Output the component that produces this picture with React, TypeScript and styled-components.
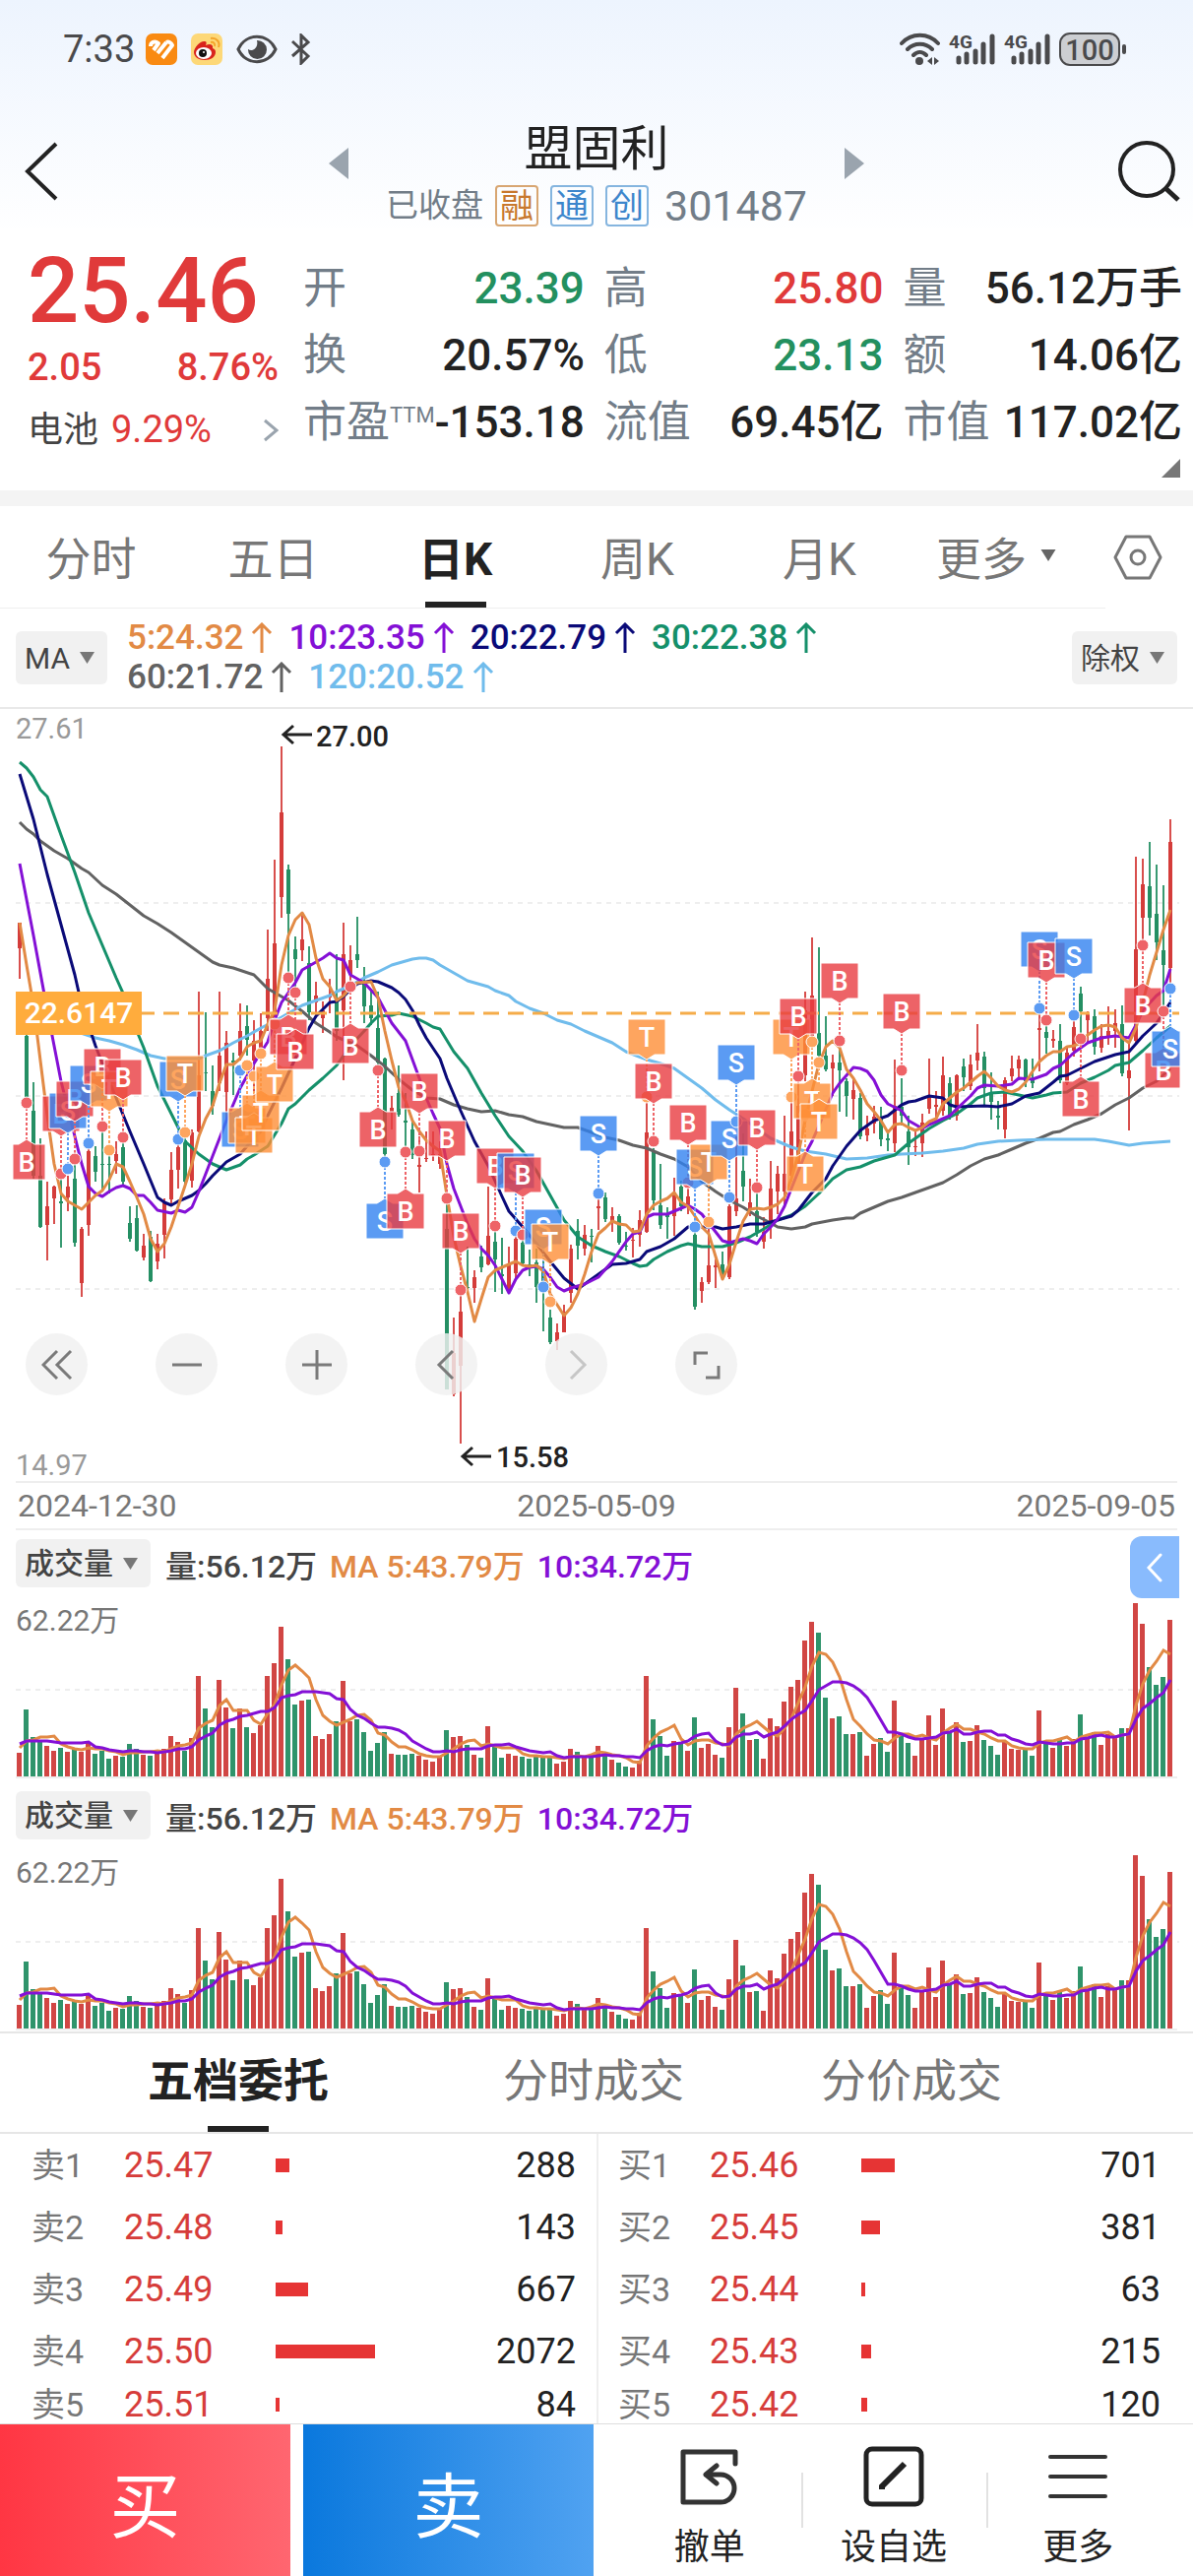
import React from "react";
import styled, { createGlobalStyle, css } from "styled-components";

const RED = "#e03a3a";
const GREEN = "#23905f";
const INK = "#222222";
const GRAY = "#777777";
const SLATE = "#727d88";
const ORANGE = "#e28a45";
const PURPLE = "#8410d6";
const NAVY = "#0a0a78";
const TEAL = "#15906a";
const SKY = "#70bcec";
const STONE = "#626262";

const GlobalStyle = createGlobalStyle`
  *, *::before, *::after { box-sizing: border-box; }
  body {
    margin: 0;
    background: #ffffff;
    color: ${INK};
    font-family: Roboto, "Noto Sans CJK SC", sans-serif;
  }
  button, select { font: inherit; color: inherit; border: 0; background: none; padding: 0; margin: 0; cursor: pointer; }
  h1, dl, dd, dt { margin: 0; font-weight: inherit; }
`;

/* ---------- data ---------- */

// Turnover per session: r = up day, g = down day, number = volume in plot units.
const VOLUME =
  "r71 g205 g121 g111 r94 r79 g88 r76 g85 r76 r106 g70 g79 g55 r63 g59 g100 g85 r67 g64 r79 r85 r124 r106 g79 r117 " +
  "r307 g208 g151 r295 r211 g147 r208 g151 r133 r156 r307 r346 r457 g358 g220 r231 g235 r124 r115 r130 g169 r292 r169 " +
  "g175 g136 g79 g103 g136 r70 g67 g67 g70 r64 r52 r46 r61 g142 r121 r124 g97 r67 g58 r154 g91 g58 r70 r64 g61 g55 " +
  "g61 g61 g61 r40 r46 r85 g76 r58 g63 r94 g66 r52 g43 g31 r28 r49 r307 g175 g123 g64 r108 g106 r79 g181 r88 r100 " +
  "r67 g58 r151 r271 g193 r112 g115 r55 r178 r154 r229 r274 r295 r415 r472 g439 g241 r178 g184 g130 r130 g136 r64 " +
  "r100 g117 g76 r232 g123 g103 r64 r111 r187 r97 r208 g136 r166 g106 r109 r157 g112 g94 g67 r109 r85 r82 g82 g64 " +
  "r202 g109 r88 g114 r94 r114 g190 r121 g136 r97 r130 r121 g147 r147 r529 r466 g334 g280 g304 r478";

const volumes = VOLUME.split(" ").map((s) => ({ up: s[0] === "r", v: Number(s.slice(1)) }));

const average = (size: number, lead: number[]) =>
  volumes.map((_, i) =>
    i < lead.length
      ? lead[i]
      : volumes.slice(Math.max(0, i - size + 1), i + 1).reduce((sum, d) => sum + d.v, 0) /
        Math.min(size, i + 1)
  );

const volumeMa5 = average(5, [86, 108, 110, 119]);
const volumeMa10 = average(10, [99, 108, 108, 108, 108, 105, 103, 103, 103]);

// Candles as high, low, body top, body bottom. 0 is 27.61 and 1540 is 14.97.
const CANDLES = `425 538 425 476|600 790 650 780|743 935 800 930|855 1032 930 1030|940 1097 990 1028|948 1026 950 975|925 1073 980 983|930 1000 950 972
890 1070 935 1062|1030 1170 1035 1143|870 1048 880 1028|870 940 890 922|840 960 905 908|885 965 905 908|860 925 885 900|860 948 872 940
990 1060 1024 1055|988 1080 1014 1078|1044 1098 1068 1092|1038 1140 1050 1138|1044 1116 1065 1100|975 1094 980 1046|882 990 918 976|866 955 872 918
855 945 858 940|836 952 842 938|562 842 730 840|604 760 723 726|710 808 760 790|563 760 690 745|640 822 665 762|684 768 700 703
586 700 640 690|590 690 632 658|620 770 660 700|605 700 640 680|440 640 538 615|300 620 466 615|74 416 205 375|310 530 320 408
452 560 478 498|405 502 458 480|472 620 505 604|542 612 570 585|582 645 600 615|538 606 570 575|488 660 575 640|425 738 488 600
470 550 500 530|414 515 488 500|513 625 545 592|560 630 590 615|563 710 635 704|693 895 695 885|770 836 794 804|710 812 765 808
765 870 820 823|822 895 836 888|850 962 908 911|840 902 893 896|840 900 885 888|860 915 885 905|985 1355 1035 1355|1212 1368 1282 1365
1165 1462 1200 1308|1070 1155 1150 1153|1117 1182 1130 1152|1068 1122 1090 1112|950 1108 1048 1106|1040 1160 1060 1096|1052 1165 1125 1128|1070 1165 1105 1160
1050 1132 1055 1124|1055 1110 1062 1104|1076 1128 1106 1109|1075 1182 1102 1150|1100 1238 1120 1152|1195 1265 1212 1260|1223 1275 1240 1258|1185 1240 1200 1240
1066 1182 1075 1162|1015 1095 1038 1068|1028 1088 1046 1074|1034 1102 1048 1051|975 1036 990 993|963 1022 972 1015|992 1040 1010 1024|1005 1066 1010 1062
1040 1078 1068 1071|1032 1092 1056 1059|998 1070 1018 1046|770 1042 842 1040|875 998 880 978|906 1035 988 1028|992 1055 1008 1011|932 1048 962 1010
938 1000 950 990|955 1006 970 985|1035 1195 1046 1190|1130 1182 1140 1158|1034 1144 1108 1140|1095 1152 1108 1111|1080 1135 1105 1132|985 1134 990 1130
850 1010 975 1000|845 980 920 950|935 1010 982 995|965 1050 1000 1040|1012 1074 1040 1060|900 1055 955 1020|910 1005 925 960|810 985 925 960
780 940 840 930|735 910 790 905|562 740 600 730|454 660 570 650|475 700 645 690|612 722 690 718|688 770 704 716|670 802 704 720
735 812 740 770|735 818 758 776|765 856 775 850|810 860 834 848|790 845 812 826|792 870 814 856|840 880 855 858|697 882 790 865
735 830 792 810|810 908 840 872|838 890 870 873|806 892 824 864|695 805 768 796|760 825 788 791|692 810 730 800|734 818 745 810
728 820 730 810|696 760 712 734|688 758 708 750|628 720 685 700|683 788 692 755|724 818 765 782|780 836 810 813|734 854 738 836
690 740 716 732|690 738 698 716|695 752 698 740|695 755 735 745|600 722 636 639|625 686 642 655|638 675 657 660|628 744 660 738
675 748 684 745|620 692 634 680|552 660 567 602|602 665 608 620|598 688 612 672|628 684 650 675|592 668 640 655|597 675 626 640
590 732 628 726|660 838 720 735|294 665 478 660|298 460 348 416|264 450 352 416|310 500 408 465|350 590 480 510|220 545 265 515`
  .split(/[|\n]/)
  .map((c) => c.trim().split(" ").map(Number));

// Moving averages as "session level" pairs, in the same units as the candles.
const AVERAGES: { color: string; points: string }[] = [
  {
    color: STONE,
    points:
      "0 225 1 240 2 248 3 262 5 282 7 298 9 318 10 325 12 350 14 368 16 390 18 412 20 427 22 445 24 465 26 484 28 503 29 510 31 515 34 530 36 556 37 564 39 580 41 602 43 625 45 642 46 652 49 670 51 690 53 712 55 736 57 758 59 775 61 777 63 788 65 795 67 801 69 800 71 808 73 812 75 822 77 828 79 833 81 833 83 842 85 852 87 858 89 868 91 875 93 885 95 895 97 912 99 940 101 960 103 978 105 992 107 1010 109 1024 110 1030 112 1035 114 1030 115 1025 118 1018 120 1013 121 1013 122 1004 124 992 126 980 128 972 130 962 132 952 134 942 136 928 138 910 140 895 142 887 144 876 146 865 148 855 150 843 151 840 153 828 155 818 157 805 159 788 161 775 163 755 165 740 167 715",
  },
  {
    color: SKY,
    points:
      "8 640 11 655 13 660 15 668 17 678 19 690 21 695 26 695 27 690 29 680 31 665 33 650 35 635 37 622 39 605 41 590 43 580 45 570 46 562 48 550 50 535 52 523 54 510 56 502 57 498 58 496 59 495 60 499 61 510 63 525 65 540 68 553 69 560 71 570 72 582 74 595 76 606 78 620 80 628 82 640 84 652 86 665 88 683 91 697 93 705 95 715 97 735 99 755 101 778 103 798 105 815 107 835 109 855 112 872 114 880 117 886 120 895 123 893 126 888 128 885 131 883 134 880 137 874 139 866 142 861 145 858 149 856 156 856 158 861 161 868 163 865 167 860",
  },
  {
    color: TEAL,
    points:
      "0 106 1 118 2 135 3 160 4 175 6 250 8 325 10 405 12 470 14 535 16 595 17 640 18 675 20 750 22 805 24 860 26 885 28 905 30 918 32 907 33 895 34 888 36 870 38 825 39 795 40 785 42 758 44 735 46 710 48 670 50 640 51 625 52 612 54 610 55 605 57 612 59 625 60 633 61 637 63 682 65 715 67 765 69 810 71 850 73 880 75 920 77 968 79 1018 81 1050 83 1068 85 1080 87 1090 89 1103 90 1110 91 1108 92 1096 94 1080 96 1068 97 1064 99 1070 102 1070 104 1062 106 1050 108 1035 110 1018 112 1008 114 990 116 965 118 935 120 918 122 912 124 900 126 892 127 888 129 865 130 855 132 835 134 820 136 805 138 785 139 775 141 765 143 763 145 768 147 774 149 768 150 764 152 762 154 745 156 733 158 720 159 710 161 703 163 680 165 655 167 632",
  },
  {
    color: NAVY,
    points:
      "0 130 2 220 4 330 6 430 8 530 9 590 11 670 13 740 14 775 16 840 18 905 20 972 21 982 22 987 23 980 25 968 26 958 27 945 28 930 30 902 32 885 34 855 35 840 36 810 38 755 40 695 42 635 43 612 44 598 45 585 46 582 47 572 48 558 49 547 51 541 52 543 54 555 55 564 56 578 57 600 58 630 59 655 61 695 62 735 64 800 66 860 68 910 70 970 71 1000 73 1030 75 1065 77 1100 79 1132 81 1155 83 1135 85 1115 86 1106 88 1103 90 1095 91 1080 93 1070 95 1055 96 1042 97 1030 101 1030 102 1034 104 1030 106 1026 108 1025 110 1018 112 1010 113 998 115 962 117 935 118 910 120 870 122 838 124 820 126 810 128 788 129 782 130 780 132 770 134 775 135 788 136 792 140 790 142 792 144 785 146 770 148 765 150 742 151 732 152 730 154 715 156 702 159 688 161 683 163 650 165 625 167 585",
  },
  {
    color: PURPLE,
    points:
      "0 308 2 450 4 600 6 740 8 850 9 905 10 950 11 965 12 970 13 960 14 952 15 948 16 955 17 968 18 968 19 982 20 998 22 1003 23 998 24 1002 25 992 26 960 28 890 30 820 32 755 34 705 36 662 37 620 38 585 40 545 41 520 42 512 44 495 45 486 46 495 47 500 48 530 50 545 52 575 54 625 56 660 57 698 58 735 59 775 60 805 61 835 62 905 63 955 64 990 65 1025 66 1055 67 1075 68 1088 69 1108 70 1135 71 1162 72 1135 73 1118 74 1112 75 1110 76 1116 77 1130 78 1150 79 1158 80 1152 82 1144 84 1130 86 1100 88 1060 89 1045 90 1040 91 1012 92 1006 94 1006 96 994 97 988 98 995 99 1005 101 1040 102 1058 103 1062 104 1058 105 1055 106 1058 107 1064 108 1045 109 1030 110 1015 111 990 112 955 114 885 115 860 116 830 118 765 119 745 120 730 121 713 122 715 123 722 124 738 125 768 126 785 128 800 129 820 130 828 131 834 132 828 134 815 135 810 136 795 138 770 139 755 140 748 142 750 144 747 145 735 147 737 149 728 150 715 151 710 153 685 155 665 157 655 159 650 161 655 162 630 163 600 165 570 166 560 167 517",
  },
  {
    color: ORANGE,
    points:
      "0 425 1 510 2 590 3 700 4 810 5 905 6 965 7 980 8 987 9 996 10 982 11 968 12 958 13 936 14 905 15 912 16 940 17 972 18 1005 19 1055 20 1080 21 1065 22 1030 23 990 24 948 25 905 26 850 27 815 28 790 29 745 30 708 31 708 32 695 33 672 34 665 35 660 36 628 37 600 38 510 39 450 40 420 41 406 42 430 43 495 44 538 45 552 46 580 47 570 48 555 49 545 51 542 52 575 53 640 54 700 55 752 56 780 57 820 58 840 59 858 60 870 61 880 62 968 63 1050 64 1110 65 1160 66 1220 67 1175 68 1130 69 1118 70 1112 71 1106 72 1100 73 1108 74 1110 75 1108 76 1120 77 1165 78 1185 79 1208 80 1192 81 1165 82 1125 83 1080 84 1045 85 1032 86 1020 87 1026 88 1028 89 1040 90 1038 91 1005 92 988 93 980 94 974 95 962 96 982 97 990 98 1010 99 1030 100 1045 101 1090 102 1135 103 1105 104 1060 105 1020 106 995 107 993 108 996 109 992 110 985 111 972 112 935 113 885 114 820 115 760 116 705 117 672 118 660 119 675 120 718 121 735 122 758 123 785 124 802 125 820 126 842 127 828 128 825 129 833 130 838 131 833 132 822 133 815 134 785 135 775 136 762 137 755 138 742 139 732 140 722 141 735 142 750 143 758 144 762 145 756 146 742 147 722 148 702 149 690 150 682 151 682 152 672 153 670 154 665 155 648 156 638 157 632 158 630 159 634 160 655 161 665 162 635 163 585 164 530 165 485 166 440 167 400",
  },
];

type Kind = "B" | "S" | "T";
// Trades: session, kind, label top, dot level. The label points towards its dot.
const TRADES: [number, Kind, number, number][] = [
  [1, "B", 866, 784], [6, "B", 770, 925], [7, "S", 765, 916], [8, "B", 741, 895], [10, "S", 710, 864],
  [12, "B", 677, 831], [13, "T", 722, 878], [15, "B", 698, 852], [23, "S", 702, 856], [24, "T", 689, 843],
  [32, "S", 802, 719], [33, "T", 793, 709], [34, "T", 814, 732], [35, "T", 769, 686], [37, "T", 711, 628],
  [39, "B", 617, 536], [40, "B", 647, 565], [48, "B", 635, 553], [52, "B", 802, 719], [53, "S", 984, 902],
  [56, "B", 965, 882], [58, "B", 726, 880], [62, "B", 820, 974], [64, "B", 1003, 1156], [69, "B", 874, 1029],
  [72, "S", 884, 1039], [73, "B", 892, 1047], [76, "S", 996, 1150], [77, "T", 1025, 1180], [84, "S", 810, 964],
  [91, "T", 617, 772], [92, "B", 706, 860], [97, "B", 788, 943], [98, "S", 877, 1030], [100, "T", 867, 1021],
  [103, "S", 820, 973], [104, "S", 668, 822], [107, "B", 798, 953], [112, "T", 617, 772], [113, "B", 576, 731],
  [114, "T", 890, 808], [115, "T", 745, 662], [116, "T", 786, 704], [119, "B", 506, 660], [128, "B", 566, 720],
  [148, "S", 442, 596], [149, "B", 465, 619], [153, "S", 456, 609], [154, "B", 740, 656], [163, "B", 554, 471],
  [166, "B", 685, 602], [167, "S", 640, 556],
];
const TRADE_FILL: Record<Kind, string> = {
  B: "rgba(233,60,65,0.8)",
  S: "rgba(50,130,240,0.8)",
  T: "rgba(254,142,55,0.8)",
};
const TRADE_DOT: Record<Kind, string> = { B: "#ee6367", S: "#5b9bf3", T: "#fea55f" };

const px = (session: number) => 20 + session * 7;
const py = (level: number) => Math.round(level / 1.96);

const toPath = (points: string) => {
  const n = points.split(" ").map(Number);
  const out: string[] = [];
  for (let i = 0; i < n.length; i += 2) out.push(`${px(n[i])},${py(n[i + 1])}`);
  return out.join(" ");
};

/* ---------- status bar and title ---------- */

const Screen = styled.main`
  display: flex;
  flex-direction: column;
  background: #ffffff;
`;

const Top = styled.header`
  background: linear-gradient(#edf4fe, #ffffff 240px);
`;

const StatusBar = styled.div`
  height: 100px;
  display: flex;
  align-items: center;
  justify-content: space-between;
  padding: 0 67px 0 64px;
  color: #4a4a4c;
  font-size: 38px;
`;

const StatusGroup = styled.div<{ $gap: number }>`
  display: flex;
  align-items: center;
  gap: ${(p) => p.$gap}px;
`;

const TitleBar = styled.div`
  margin-top: 15px;
  height: 117px;
  display: grid;
  grid-template-columns: 1fr auto 1fr;
  align-items: center;
  padding: 0 12px;
`;

const IconButton = styled.button`
  display: flex;
  align-items: center;
  justify-content: center;
`;

const BackButton = styled(IconButton)`
  justify-self: start;
  padding-left: 12px;
`;

const SearchButton = styled(IconButton)`
  justify-self: end;
`;

const NameBlock = styled.div`
  align-self: stretch;
  display: flex;
  width: 544px;
  justify-content: space-between;
`;

const StepButton = styled(IconButton)`
  height: 102px;
`;

const NameColumn = styled.div`
  display: flex;
  flex-direction: column;
  align-items: center;
  gap: 8px;
  padding-top: 10px;
`;

const StockName = styled.h1`
  font-size: 49px;
  line-height: 54px;
`;

const SubLine = styled.div`
  display: flex;
  align-items: center;
  gap: 12px;
  color: ${SLATE};
  font-size: 33px;
  line-height: 44px;
`;

const Tag = styled.span<{ $tone: string; $edge: string }>`
  width: 44px;
  height: 42px;
  border: 2px solid ${(p) => p.$edge};
  border-radius: 4px;
  color: ${(p) => p.$tone};
  display: flex;
  align-items: center;
  justify-content: center;
  font-size: 34px;
`;

const Code = styled.span`
  font-size: 43px;
  margin-left: 4px;
`;

/* ---------- quote ---------- */

const Quote = styled.section`
  display: flex;
  align-items: flex-start;
  position: relative;
  padding: 18px 11px 35px 28px;
`;

const PriceColumn = styled.div`
  width: 280px;
  color: ${RED};
  font-size: 38px;
  line-height: 44px;
`;

const BigPrice = styled.div`
  font-size: 92px;
  line-height: 92px;
  font-weight: 500;
`;

const PriceLine = styled.div<{ $top: number }>`
  display: flex;
  justify-content: space-between;
  align-items: center;
  margin-top: ${(p) => p.$top}px;
  padding-right: 25px;
  font-weight: ${(p) => (p.$top < 12 ? 500 : 400)};
`;

const Sector = styled.span`
  font-size: 36px;
  color: #444444;
  margin-right: 13px;
`;

const Stats = styled.dl`
  flex: 1;
  display: grid;
  grid-template-columns: repeat(3, 1fr);
  column-gap: 20px;
  padding-top: 9px;
`;

const Stat = styled.div`
  display: flex;
  justify-content: space-between;
  white-space: nowrap;
  height: 68px;
  line-height: 68px;
  font-size: 44px;
`;

const StatName = styled.dt`
  color: ${SLATE};
  sup {
    font-size: 22px;
    line-height: 0;
    vertical-align: 15px;
  }
`;

const StatValue = styled.dd<{ $tone?: string }>`
  color: ${(p) => p.$tone ?? INK};
  font-weight: 500;
`;

const Corner = styled.svg`
  position: absolute;
  right: 13px;
  bottom: 13px;
`;

const Band = styled.div`
  height: 16px;
  background: #f4f4f4;
`;

/* ---------- tabs ---------- */

const PeriodTabs = styled.nav`
  display: flex;
  height: 104px;
`;

const tabText = css`
  font-size: 46px;
  color: ${GRAY};
  white-space: nowrap;
`;

const Tab = styled.button<{ $active?: boolean }>`
  ${tabText}
  flex: 185 1 0;
  position: relative;
  display: flex;
  align-items: center;
  justify-content: center;
  padding-bottom: 4px;
  border-bottom: 1px solid #eeeeee;
  ${(p) =>
    p.$active &&
    css`
      color: ${INK};
      font-weight: 700;
      &::after {
        content: "";
        position: absolute;
        bottom: 0;
        width: 62px;
        height: 6px;
        background: ${INK};
      }
    `}
`;

const MoreTab = styled(Tab)`
  flex: 174 1 0;
  gap: 14px;
  padding-right: 24px;
`;

const GearButton = styled(IconButton)`
  width: 89px;
  padding-right: 24px;
`;

/* ---------- indicator header ---------- */

const Indicators = styled.div`
  display: flex;
  align-items: center;
  justify-content: space-between;
  height: 102px;
  padding: 0 16px;
  border-bottom: 2px solid #e9e9e9;
`;

const IndicatorLeft = styled.div`
  display: flex;
  align-items: center;
  gap: 20px;
`;

const Picker = styled.span<{ $width: number; $height: number }>`
  position: relative;
  display: inline-flex;
  width: ${(p) => p.$width}px;
  height: ${(p) => p.$height}px;
  select {
    appearance: none;
    width: 100%;
    padding-left: 9px;
    border-radius: 6px;
    background: #f1f1f1;
    color: #444444;
    font-size: 30px;
  }
  svg {
    position: absolute;
    right: 13px;
    top: 50%;
    margin-top: -6px;
    pointer-events: none;
  }
`;

const MaGrid = styled.div`
  display: flex;
  flex-direction: column;
  font-size: 35px;
  font-weight: 500;
  line-height: 40px;
`;

const MaRow = styled.div`
  display: flex;
  gap: 16px;
`;

const MaValue = styled.span<{ $tone: string }>`
  display: flex;
  align-items: center;
  gap: 8px;
  color: ${(p) => p.$tone};
`;

/* ---------- charts ---------- */

const ChartBox = styled.section`
  position: relative;
`;

const Plot = styled.svg`
  display: block;
  width: 100%;
  height: auto;
  font-family: Roboto, "Noto Sans CJK SC", sans-serif;
`;

const ChartControls = styled.div`
  position: absolute;
  left: 26px;
  bottom: 89px;
  display: flex;
  gap: 69px;
`;

const RoundButton = styled.button`
  width: 63px;
  height: 63px;
  border-radius: 50%;
  background: rgba(240, 240, 240, 0.82);
  display: flex;
  align-items: center;
  justify-content: center;
`;

const Dates = styled.div`
  display: flex;
  justify-content: space-between;
  margin: 0 16px;
  padding: 0 2px;
  border-bottom: 2px solid #eeeeee;
  color: ${GRAY};
  font-size: 32px;
  line-height: 46px;
`;

const VolumeStack = styled.div`
  display: flex;
  flex-direction: column;
  gap: 3px;
  border-bottom: 2px solid #e6e6e6;
`;

const VolumeBox = styled.section`
  position: relative;
`;

const VolumeHead = styled.div`
  display: flex;
  align-items: center;
  gap: 13px;
  height: 60px;
  padding: 8px 16px 1px;
  font-size: 32px;
  font-weight: 500;
  white-space: nowrap;
`;

const Tint = styled.span<{ $tone: string; $lead?: boolean }>`
  color: ${(p) => p.$tone};
  margin-left: ${(p) => (p.$lead ? 2 : 0)}px;
`;

const SideHandle = styled.button`
  position: absolute;
  right: 14px;
  top: 6px;
  width: 50px;
  height: 63px;
  border-radius: 12px 0 0 12px;
  background: #89bbfd;
  display: flex;
  align-items: center;
  justify-content: center;
`;

/* ---------- order book ---------- */

const BookTabs = styled.nav`
  display: grid;
  grid-template-columns: 484fr 238fr 408fr 82fr;
  height: 102px;
  border-bottom: 2px solid #e6e6e6;
`;

const BookTab = styled(Tab)`
  border-bottom: 0;
  padding-bottom: 12px;
`;

const Book = styled.div`
  display: grid;
  grid-template-columns: 1fr 1fr;
`;

const BookTable = styled.table<{ $right?: boolean }>`
  width: 100%;
  border-collapse: collapse;
  table-layout: fixed;
  ${(p) => p.$right && "border-left: 2px solid #eeeeee;"}
  td, th {
    padding: 0;
    height: 63px;
    font-size: 36px;
    line-height: 36px;
    font-weight: 400;
    text-align: left;
    vertical-align: middle;
  }
  tr:last-child > * {
    height: 42px;
    padding-top: 4px;
  }
  th {
    width: ${(p) => (p.$right ? 114 : 126)}px;
    padding-left: ${(p) => (p.$right ? 20 : 32)}px;
    font-size: 34px;
    color: ${GRAY};
  }
  td:nth-child(2) { width: 154px; color: #d63c3a; }
  td:nth-child(3) { width: 120px; }
  td:nth-child(4) {
    text-align: right;
    padding-right: ${(p) => (p.$right ? 32 : 21)}px;
  }
`;

const SizeBar = styled.div`
  height: 14px;
  background: #e63434;
`;

/* ---------- footer ---------- */

const Footer = styled.footer`
  display: flex;
  height: 156px;
  border-top: 1px solid #dddddd;
`;

const TradeButton = styled.button<{ $from: string; $to: string }>`
  flex: 295 1 0;
  color: #ffffff;
  font-size: 72px;
  background: linear-gradient(90deg, ${(p) => p.$from}, ${(p) => p.$to});
  & + & {
    margin-left: 13px;
  }
`;

const Actions = styled.div`
  flex: 562 1 0;
  display: flex;
  padding: 0 23px 0 24px;
`;

const Action = styled.button`
  flex: 1;
  position: relative;
  display: flex;
  flex-direction: column;
  align-items: center;
  gap: 16px;
  padding-top: 22px;
  font-size: 36px;
  line-height: 50px;
  & + &::before {
    content: "";
    position: absolute;
    left: 0;
    top: 49px;
    width: 2px;
    height: 56px;
    background: #e2e2e2;
  }
`;

/* ---------- small drawings ---------- */

const Triangle = ({ size = 15, fill = GRAY }: { size?: number; fill?: string }) => (
  <svg width={size} height={12} viewBox="0 0 15 12" aria-hidden="true">
    <path d="M0 0h15l-7.500 12z" fill={fill} />
  </svg>
);

const UpArrow = () => (
  <svg width="22" height="32" viewBox="0 0 22 32" fill="none" stroke="currentColor" strokeWidth="3" aria-hidden="true">
    <path d="M11 31V2M2 11l9-9 9 9" />
  </svg>
);

const Signal = () => (
  <svg width="47" height="34" viewBox="0 0 47 34" stroke="#4a4a4c" strokeWidth="5" strokeLinecap="round" aria-hidden="true">
    <text x="0" y="16" fontSize="19" fontWeight="700" fill="#4a4a4c" stroke="none">4G</text>
    <path d="M10 26v4M18 22v8M27 19v11M35 12v18M44 4v26" />
  </svg>
);

const StatusIcons = () => (
  <>
    <StatusGroup $gap={11}>
      <span>7:33</span>
      <StatusGroup $gap={14}>
        <svg width="32" height="32" viewBox="0 0 32 32" aria-hidden="true">
          <rect width="32" height="32" rx="7" fill="#f98a12" />
          <g fill="none" stroke="#fff" strokeWidth="4" strokeLinejoin="round">
            <path d="M5 13c0-4 4-6 8-3l-5 7M12 20L21 9M17 25L27 12c-1-3-4-4-6-3" />
          </g>
        </svg>
        <svg width="32" height="32" viewBox="0 0 32 32" aria-hidden="true">
          <rect width="32" height="32" rx="7" fill="#fdd878" />
          <path d="M3 19c0-5 7-12 11-11 2 0 2 2 1 4 4-2 8-1 7 3 3 1 3 3 3 4 0 5-5 8-11 8S3 24 3 19z" fill="#d9231c" />
          <ellipse cx="13" cy="20" rx="8" ry="6" fill="#fff" />
          <circle cx="12" cy="20" r="4" fill="#111" />
          <circle cx="13" cy="19" r="1" fill="#fff" />
          <path d="M20 9c3-1 5 2 4 4M20 5c6-1 10 4 8 9" fill="none" stroke="#f4a52b" strokeWidth="2" />
        </svg>
        <svg width="42" height="30" viewBox="0 0 42 30" aria-hidden="true">
          <path d="M2 15C10-2 32-2 40 15 32 32 10 32 2 15z" fill="none" stroke="#4a4a4c" strokeWidth="3" />
          <path d="M21 6a9.500 9.500 0 1 1-9 9c4 3 11-1 9-9z" fill="#4a4a4c" />
        </svg>
        <svg width="20" height="32" viewBox="0 0 20 32" fill="none" stroke="#4a4a4c" strokeWidth="3" aria-hidden="true">
          <path d="M1 8l16 15-7 7V2l7 7L1 23" />
        </svg>
      </StatusGroup>
    </StatusGroup>
    <StatusGroup $gap={9}>
      <svg width="41" height="34" viewBox="0 0 41 34" aria-hidden="true">
        <g fill="none" stroke="#4a4a4c" strokeWidth="4" strokeLinecap="round">
          <path d="M2 11c10-11 27-11 37 0M8 17c7-7 18-7 25 0M14 23c4-4 9-4 13 0" />
        </g>
        <circle cx="20" cy="29" r="4" fill="#4a4a4c" />
        <path d="M33 25v8l-5-4zM35 25v8l5-4z" fill="#4a4a4c" />
      </svg>
      <Signal />
      <Signal />
      <svg width="69" height="34" viewBox="0 0 69 34" aria-hidden="true">
        <rect x="1" y="1" width="60" height="32" rx="10" fill="#ccced2" stroke="#4a4a4c" strokeWidth="2" />
        <rect x="64" y="12" width="4" height="10" rx="2" fill="#4a4a4c" />
        <text x="31" y="28" textAnchor="middle" fontSize="29" fontWeight="500" fill="#4a4a4c">100</text>
      </svg>
    </StatusGroup>
  </>
);

/* ---------- price chart ---------- */

const Trade = ({ at, kind, top, dot }: { at: number; kind: Kind; top: number; dot: number }) => {
  const x = px(at);
  const y = py(top);
  const d = py(dot);
  const down = dot > top;
  const left = Math.max(x - 19, 13);
  const right = Math.min(x + 19, 1199);
  const shape = down
    ? `M${left} ${y}H${right}V${y + 36}H${x + 8}L${x} ${y + 41}L${x - 8} ${y + 36}H${left}Z`
    : `M${left} ${y}H${x - 8}L${x} ${y - 5}L${Math.min(x + 8, right)} ${y}H${right}V${y + 36}H${left}Z`;
  return (
    <g>
      <line x1={x} x2={x} y1={down ? y + 40 : y - 4} y2={d} stroke={TRADE_DOT[kind]} strokeWidth="2" strokeDasharray="3 2" />
      <circle cx={x} cy={d} r="6" fill={TRADE_DOT[kind]} stroke="#fff" />
      <path d={shape} fill={TRADE_FILL[kind]} stroke="#fff" />
      <text x={x} y={y + 28} textAnchor="middle" fontSize="27" fontWeight="500" fill="#fff">
        {kind}
      </text>
    </g>
  );
};

const PriceChart = () => (
  <Plot viewBox="0 0 1212 786" role="img" aria-label="日K">
    {[386, 770, 1154].map((level) => (
      <line key={level} x1="16" x2="1198" y1={py(level)} y2={py(level)} stroke="#eeeeee" strokeWidth="2" strokeDasharray="5 5" />
    ))}
    <line x1="16" x2="1196" y1="785" y2="785" stroke="#eeeeee" strokeWidth="2" />
    {CANDLES.map(([high, low, top, bottom], i) => {
      const fill = volumes[i].up ? "#d43c3a" : "#248f63";
      return (
        <g key={i} fill={fill}>
          <rect x={px(i) - 1} y={py(high)} width="2" height={py(low) - py(high)} opacity="0.9" />
          <rect x={px(i) - 2} y={py(top)} width="4" height={Math.max(1, py(bottom) - py(top))} />
        </g>
      );
    })}
    {AVERAGES.map((line) => (
      <polyline key={line.color} points={toPath(line.points)} fill="none" stroke={line.color} strokeWidth="3" strokeLinejoin="round" />
    ))}
    <line x1="16" x2="1198" y1="309" y2="309" stroke="#f5ac49" strokeWidth="3" strokeDasharray="16 9" />
    {TRADES.map(([at, kind, top, dot]) => (
      <Trade key={at} at={at} kind={kind} top={top} dot={dot} />
    ))}
    <rect x="16" y="287" width="128" height="44" fill="#ffac3d" />
    <text x="80" y="319" textAnchor="middle" fontSize="30" fontWeight="500" fill="#fff">22.6147</text>
    <g fontSize="29" fill="#999999">
      <text x="16" y="30">27.61</text>
      <text x="16" y="778">14.97</text>
    </g>
    <g fontSize="29" fontWeight="500" fill={INK}>
      <text x="321" y="38">27.00</text>
      <text x="504" y="770">15.58</text>
    </g>
    <g fill="none" stroke={INK} strokeWidth="3">
      <path d="M317 26h-28M298 17l-10 9 10 9" />
      <path d="M499 759h-28M480 750l-10 9 10 9" />
    </g>
  </Plot>
);

const controlStroke = (color = "#7a7a7a") => ({
  width: 32,
  height: 32,
  viewBox: "0 0 32 32",
  fill: "none",
  stroke: color,
  strokeWidth: 3,
  "aria-hidden": true,
});

const CONTROLS: { name: string; path: string; color?: string }[] = [
  { name: "最早", path: "M16 2L2 16l14 14M30 2L16 16l14 14" },
  { name: "缩小", path: "M1 16h30" },
  { name: "放大", path: "M1 16h30M16 1v30" },
  { name: "向前", path: "M22 2L8 16l14 14" },
  { name: "向后", path: "M10 2l14 14-14 14", color: "#c6c6c6" },
  { name: "全屏", path: "M4 16V4h13M28 17v12H15" },
];

/* ---------- volume chart ---------- */

const volumePath = (series: number[]) =>
  series.map((v, i) => `${px(i)},${Math.round(190 - v / 3)}`).join(" ");

const VolumePanel = ({ id, handle }: { id: string; handle?: boolean }) => (
  <VolumeBox>
    <VolumeHead>
      <Picker $width={137} $height={49}>
        <select id={id} aria-label="指标" defaultValue="成交量">
          <option>成交量</option>
        </select>
        <Triangle />
      </Picker>
      <Tint $tone="#444444" $lead>量:56.12万</Tint>
      <Tint $tone={ORANGE}>MA 5:43.79万</Tint>
      <Tint $tone={PURPLE}>10:34.72万</Tint>
    </VolumeHead>
    {handle && (
      <SideHandle aria-label="展开">
        <svg width="16" height="30" viewBox="0 0 16 30" fill="none" stroke="#fff" strokeWidth="3" strokeLinecap="round" aria-hidden="true">
          <path d="M14 2L2 15l12 13" />
        </svg>
      </SideHandle>
    )}
    <Plot viewBox="0 0 1212 193" role="img" aria-label="成交量">
      <line x1="16" x2="1198" y1="102" y2="102" stroke="#eeeeee" strokeWidth="2" strokeDasharray="5 5" />
      <line x1="16" x2="1196" y1="191" y2="191" stroke="#eeeeee" strokeWidth="2" />
      <text x="16" y="42" fontSize="30" fill={GRAY}>62.22万</text>
      {volumes.map((d, i) => {
        const h = Math.round(d.v / 3);
        return <rect key={i} x={px(i) - 3} y={190 - h} width="5" height={h} fill={d.up ? "#d14644" : "#2f946b"} />;
      })}
      <polyline points={volumePath(volumeMa5)} fill="none" stroke={ORANGE} strokeWidth="3" />
      <polyline points={volumePath(volumeMa10)} fill="none" stroke={PURPLE} strokeWidth="3" />
    </Plot>
  </VolumeBox>
);

/* ---------- order book ---------- */

type Level = [string, string, number];
const ASKS: Level[] = [
  ["卖1", "25.47", 288],
  ["卖2", "25.48", 143],
  ["卖3", "25.49", 667],
  ["卖4", "25.50", 2072],
  ["卖5", "25.51", 84],
];
const BIDS: Level[] = [
  ["买1", "25.46", 701],
  ["买2", "25.45", 381],
  ["买3", "25.44", 63],
  ["买4", "25.43", 215],
  ["买5", "25.42", 120],
];

const BookSide = ({ levels, right }: { levels: Level[]; right?: boolean }) => (
  <BookTable $right={right}>
    <tbody>
      {levels.map(([name, price, size]) => (
        <tr key={name}>
          <th scope="row">{name}</th>
          <td>{price}</td>
          <td>
            <SizeBar style={{ width: Math.max(4, Math.round(size / 20.5)) }} />
          </td>
          <td>{size}</td>
        </tr>
      ))}
    </tbody>
  </BookTable>
);

const STATS: { name: string; value: string; tone?: string; sup?: string }[] = [
  { name: "开", value: "23.39", tone: GREEN },
  { name: "高", value: "25.80", tone: RED },
  { name: "量", value: "56.12万手" },
  { name: "换", value: "20.57%" },
  { name: "低", value: "23.13", tone: GREEN },
  { name: "额", value: "14.06亿" },
  { name: "市盈", value: "-153.18", sup: "TTM" },
  { name: "流值", value: "69.45亿" },
  { name: "市值", value: "117.02亿" },
];

export default function App() {
  return (
    <Screen>
      <GlobalStyle />
      <Top>
        <StatusBar>
          <StatusIcons />
        </StatusBar>
        <TitleBar>
          <BackButton aria-label="返回">
            <svg width="36" height="60" viewBox="0 0 36 60" fill="none" stroke={INK} strokeWidth="4" aria-hidden="true">
              <path d="M33 2L4 30l29 28" />
            </svg>
          </BackButton>
          <NameBlock>
            <StepButton aria-label="上一只">
              <svg width="20" height="32" viewBox="0 0 20 32" aria-hidden="true">
                <path d="M20 0v32L0 16z" fill="#9aa4ae" />
              </svg>
            </StepButton>
            <NameColumn>
              <StockName>盟固利</StockName>
              <SubLine>
                <span>已收盘</span>
                <Tag $tone="#c8782e" $edge="#d8a672">融</Tag>
                <Tag $tone="#3d86cc" $edge="#85b5df">通</Tag>
                <Tag $tone="#3d86cc" $edge="#85b5df">创</Tag>
                <Code>301487</Code>
              </SubLine>
            </NameColumn>
            <StepButton aria-label="下一只">
              <svg width="20" height="32" viewBox="0 0 20 32" aria-hidden="true">
                <path d="M0 0v32l20-16z" fill="#9aa4ae" />
              </svg>
            </StepButton>
          </NameBlock>
          <SearchButton aria-label="搜索">
            <svg width="64" height="62" viewBox="0 0 64 62" fill="none" stroke={INK} strokeWidth="4" aria-hidden="true">
              <circle cx="29" cy="29" r="27" />
              <path d="M48 48l13 12" strokeWidth="5" />
            </svg>
          </SearchButton>
        </TitleBar>
      </Top>

      <Quote>
        <PriceColumn>
          <BigPrice>25.46</BigPrice>
          <PriceLine $top={9}>
            <span>2.05</span>
            <span>8.76%</span>
          </PriceLine>
          <PriceLine $top={19}>
            <span>
              <Sector>电池</Sector>9.29%
            </span>
            <svg width="16" height="24" viewBox="0 0 16 24" fill="none" stroke="#9aa4ae" strokeWidth="3" aria-hidden="true">
              <path d="M2 2l12 10L2 22" />
            </svg>
          </PriceLine>
        </PriceColumn>
        <Stats>
          {STATS.map((s) => (
            <Stat key={s.name}>
              <StatName>
                {s.name}
                {s.sup && <sup>{s.sup}</sup>}
              </StatName>
              <StatValue $tone={s.tone}>{s.value}</StatValue>
            </Stat>
          ))}
        </Stats>
        <Corner width="19" height="19" viewBox="0 0 19 19" aria-hidden="true">
          <path d="M19 0v19H0z" fill="#777777" />
        </Corner>
      </Quote>
      <Band />

      <PeriodTabs>
        <Tab>分时</Tab>
        <Tab>五日</Tab>
        <Tab $active>日K</Tab>
        <Tab>周K</Tab>
        <Tab>月K</Tab>
        <MoreTab aria-haspopup="menu">
          更多
          <Triangle size={16} fill="#666666" />
        </MoreTab>
        <GearButton aria-label="设置">
          <svg width="50" height="46" viewBox="0 0 50 46" fill="none" stroke={GRAY} strokeWidth="3" aria-hidden="true">
            <path d="M13 2h24l11 21-11 21H13L2 23z" strokeLinejoin="round" />
            <circle cx="25" cy="23" r="7" />
          </svg>
        </GearButton>
      </PeriodTabs>

      <Indicators>
        <IndicatorLeft>
          <Picker $width={93} $height={54}>
            <select aria-label="主图指标" defaultValue="MA">
              <option>MA</option>
            </select>
            <Triangle />
          </Picker>
          <MaGrid>
            <MaRow>
              <MaValue $tone={ORANGE}>5:24.32<UpArrow /></MaValue>
              <MaValue $tone={PURPLE}>10:23.35<UpArrow /></MaValue>
              <MaValue $tone={NAVY}>20:22.79<UpArrow /></MaValue>
              <MaValue $tone={TEAL}>30:22.38<UpArrow /></MaValue>
            </MaRow>
            <MaRow>
              <MaValue $tone={STONE}>60:21.72<UpArrow /></MaValue>
              <MaValue $tone={SKY}>120:20.52<UpArrow /></MaValue>
            </MaRow>
          </MaGrid>
        </IndicatorLeft>
        <Picker $width={107} $height={54}>
          <select aria-label="复权方式" defaultValue="除权">
            <option>除权</option>
          </select>
          <Triangle />
        </Picker>
      </Indicators>

      <ChartBox>
        <PriceChart />
        <ChartControls>
          {CONTROLS.map((c) => (
            <RoundButton key={c.name} aria-label={c.name}>
              <svg {...controlStroke(c.color)}>
                <path d={c.path} />
              </svg>
            </RoundButton>
          ))}
        </ChartControls>
      </ChartBox>
      <Dates>
        <span>2024-12-30</span>
        <span>2025-05-09</span>
        <span>2025-09-05</span>
      </Dates>

      <VolumeStack>
        <VolumePanel id="volume-one" handle />
        <VolumePanel id="volume-two" />
      </VolumeStack>

      <BookTabs>
        <BookTab $active>五档委托</BookTab>
        <BookTab>分时成交</BookTab>
        <BookTab>分价成交</BookTab>
      </BookTabs>
      <Book>
        <BookSide levels={ASKS} />
        <BookSide levels={BIDS} right />
      </Book>

      <Footer>
        <TradeButton $from="#ff3643" $to="#ff6670">买</TradeButton>
        <TradeButton $from="#0a78dd" $to="#50a2f1">卖</TradeButton>
        <Actions>
          <Action>
            <svg width="60" height="62" viewBox="0 0 60 62" fill="none" stroke="#333333" strokeWidth="5" strokeLinecap="round" strokeLinejoin="round" aria-hidden="true">
              <path d="M56 18V6H3v51h38a14 14 0 0 0 0-28H26M37 20L26 29l11 9" />
            </svg>
            撤单
          </Action>
          <Action>
            <svg width="62" height="62" viewBox="0 0 62 62" fill="none" stroke={INK} strokeWidth="5" aria-hidden="true">
              <rect x="3" y="3" width="56" height="56" rx="6" />
              <path d="M19 44v-3l23-23" strokeWidth="6" />
            </svg>
            设自选
          </Action>
          <Action>
            <svg width="62" height="62" viewBox="0 0 62 62" fill="none" stroke="#333333" strokeWidth="4" strokeLinecap="round" aria-hidden="true">
              <path d="M3 11h56M3 31h56M3 51h56" />
            </svg>
            更多
          </Action>
        </Actions>
      </Footer>
    </Screen>
  );
}
